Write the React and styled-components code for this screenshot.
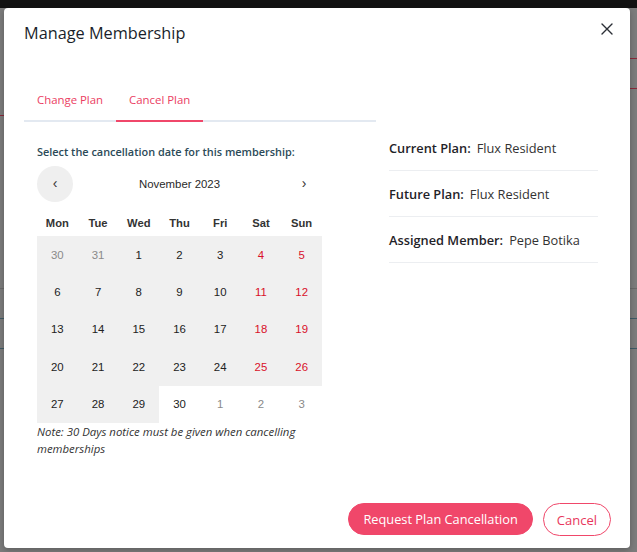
import React from "react";
import styled, { createGlobalStyle } from "styled-components";

const GlobalStyle = createGlobalStyle`
  * { box-sizing: border-box; }
  body {
    margin: 0;
    background: #7c7c7c;
    font-family: "Open Sans", "Liberation Sans", sans-serif;
  }
`;

const weekdays = ["Mon", "Tue", "Wed", "Thu", "Fri", "Sat", "Sun"];

const days = [
  { n: 30, other: true, off: true },
  { n: 31, other: true, off: true },
  { n: 1, off: true },
  { n: 2, off: true },
  { n: 3, off: true },
  { n: 4, off: true, weekend: true },
  { n: 5, off: true, weekend: true },
  { n: 6, off: true },
  { n: 7, off: true },
  { n: 8, off: true },
  { n: 9, off: true },
  { n: 10, off: true },
  { n: 11, off: true, weekend: true },
  { n: 12, off: true, weekend: true },
  { n: 13, off: true },
  { n: 14, off: true },
  { n: 15, off: true },
  { n: 16, off: true },
  { n: 17, off: true },
  { n: 18, off: true, weekend: true },
  { n: 19, off: true, weekend: true },
  { n: 20, off: true },
  { n: 21, off: true },
  { n: 22, off: true },
  { n: 23, off: true },
  { n: 24, off: true },
  { n: 25, off: true, weekend: true },
  { n: 26, off: true, weekend: true },
  { n: 27, off: true },
  { n: 28, off: true },
  { n: 29, off: true },
  { n: 30 },
  { n: 1, other: true },
  { n: 2, other: true },
  { n: 3, other: true },
];

const details = [
  { label: "Current Plan:", value: "Flux Resident" },
  { label: "Future Plan:", value: "Flux Resident" },
  { label: "Assigned Member:", value: "Pepe Botika" },
];

const App = () => {
  return (
    <Page>
      <GlobalStyle />
      <TopBar />
      <Backdrop>
        <BgRow>
          <BgTab />
          <BgButton />
        </BgRow>
        <BgLine />
        <BgLine $teal />
        <BgLine $teal />
      </Backdrop>
      <Modal>
        <Header>
          <Title>Manage Membership</Title>
          <CloseButton aria-label="Close">
            <svg width="12" height="12" viewBox="0 0 12 12">
              <path
                d="M1 1L11 11M11 1L1 11"
                stroke="#2b2f36"
                strokeWidth="1.4"
                strokeLinecap="round"
              />
            </svg>
          </CloseButton>
        </Header>
        <Body>
          <LeftColumn>
            <Tabs>
              <Tab>Change Plan</Tab>
              <Tab $active>Cancel Plan</Tab>
            </Tabs>
            <Panel>
              <Prompt>Select the cancellation date for this membership:</Prompt>
              <Calendar>
                <NavRow>
                  <NavButton $filled>‹</NavButton>
                  <MonthLabel>November 2023</MonthLabel>
                  <NavButton>›</NavButton>
                </NavRow>
                <WeekdayRow>
                  {weekdays.map((w) => (
                    <Weekday key={w}>{w}</Weekday>
                  ))}
                </WeekdayRow>
                <DayGrid>
                  {days.map((d, i) => (
                    <Day
                      key={i}
                      $off={d.off}
                      $other={d.other}
                      $weekend={d.weekend}
                    >
                      {d.n}
                    </Day>
                  ))}
                </DayGrid>
              </Calendar>
              <Note>
                Note: 30 Days notice must be given when cancelling memberships
              </Note>
            </Panel>
          </LeftColumn>
          <RightColumn>
            {details.map((d) => (
              <DetailRow key={d.label}>
                <strong>{d.label}</strong>
                <span>{d.value}</span>
              </DetailRow>
            ))}
          </RightColumn>
        </Body>
        <Footer>
          <PrimaryButton>Request Plan Cancellation</PrimaryButton>
          <OutlineButton>Cancel</OutlineButton>
        </Footer>
      </Modal>
    </Page>
  );
};

const Page = styled.div`
  position: relative;
  width: 637px;
  height: 552px;
  overflow: hidden;
  background: #7c7c7c;
`;

const TopBar = styled.div`
  height: 8px;
  background: #121212;
`;

const Backdrop = styled.div`
  display: flex;
  flex-direction: column;
  padding-top: 50px;
`;

const BgRow = styled.div`
  display: flex;
  justify-content: space-between;
  align-items: flex-start;
  height: 60px;
`;

const BgTab = styled.div`
  width: 30px;
  height: 58px;
  border-bottom: 1px solid #8a2a3a;
`;

const BgButton = styled.div`
  width: 40px;
  height: 31px;
  margin-right: -30px;
  border: 1px solid #8a2a3a;
`;

const BgLine = styled.div`
  height: 1px;
  margin-top: ${(p) => (p.$teal ? "29px" : "170px")};
  background: ${(p) => (p.$teal ? "#3e5a66" : "#6a6a6a")};
`;

const Modal = styled.div`
  position: absolute;
  left: 4px;
  top: 8px;
  width: 626px;
  height: 540px;
  background: #ffffff;
  border-radius: 4px;
  box-shadow: 0 2px 6px rgba(0, 0, 0, 0.25);
  display: flex;
  flex-direction: column;
`;

const Header = styled.div`
  display: flex;
  justify-content: space-between;
  align-items: center;
  height: 50px;
  padding: 0 16px 0 20px;
`;

const Title = styled.h2`
  margin: 0;
  font-family: "Open Sans", sans-serif;
  font-size: 16.3px;
  font-weight: 500;
  color: #1a1f2b;
`;

const CloseButton = styled.button`
  border: none;
  background: transparent;
  padding: 0;
  width: 14px;
  height: 14px;
  display: flex;
  align-items: center;
  justify-content: center;
  margin-top: -8px;
  cursor: pointer;
`;

const Body = styled.div`
  display: flex;
  align-items: flex-start;
  padding: 0 20px;
  margin-top: 19px;
`;

const LeftColumn = styled.div`
  width: 352px;
  flex: none;
`;

const Tabs = styled.div`
  display: flex;
  border-bottom: 2px solid #e3e9f1;
`;

const Tab = styled.div`
  padding: 14px 13px 11px;
  line-height: 18px;
  font-size: 11.4px;
  color: #eb3d62;
  margin-bottom: -2px;
  border-bottom: 2px solid ${(p) => (p.$active ? "#f0476a" : "transparent")};
  cursor: pointer;
`;

const Panel = styled.div`
  padding: 21px 13px 0;
`;

const Prompt = styled.div`
  font-size: 10.9px;
  line-height: 18px;
  font-weight: 600;
  color: #2c4a58;
`;

const Calendar = styled.div`
  width: 285px;
  margin-top: 5px;
  font-family: "Liberation Sans", Arial, sans-serif;
  color: #222;
`;

const NavRow = styled.div`
  display: flex;
  align-items: center;
  justify-content: space-between;
  height: 36px;
`;

const NavButton = styled.button`
  width: 36px;
  height: 36px;
  border: none;
  border-radius: 50%;
  background: ${(p) => (p.$filled ? "#efefef" : "transparent")};
  font-family: "Liberation Sans", Arial, sans-serif;
  font-size: 14px;
  color: #333;
  padding: 0 0 2px;
  cursor: pointer;
`;

const MonthLabel = styled.div`
  font-size: 11.4px;
  color: #2a2a2a;
`;

const WeekdayRow = styled.div`
  display: grid;
  grid-template-columns: repeat(7, 1fr);
  height: 26px;
  margin-top: 8px;
`;

const Weekday = styled.div`
  display: flex;
  align-items: center;
  justify-content: center;
  font-size: 11.2px;
  font-weight: 700;
  color: #333;
`;

const DayGrid = styled.div`
  display: grid;
  grid-template-columns: repeat(7, 1fr);
  grid-auto-rows: 37.4px;
`;

const Day = styled.div`
  display: flex;
  align-items: center;
  justify-content: center;
  font-size: 11.4px;
  background: ${(p) => (p.$off ? "#f0f0f0" : "#ffffff")};
  color: ${(p) => (p.$other ? "#8a8a8a" : p.$weekend ? "#d9102a" : "#222")};
`;

const Note = styled.p`
  margin: 0;
  font-size: 11.4px;
  line-height: 17px;
  font-style: italic;
  color: #333;
  width: 285px;
`;

const RightColumn = styled.div`
  width: 209px;
  margin-left: 13px;
  margin-top: 48px;
  display: flex;
  flex-direction: column;
`;

const DetailRow = styled.div`
  height: 46px;
  display: flex;
  align-items: center;
  gap: 6px;
  border-bottom: 1px solid #eceef1;
  font-size: 12.8px;
  color: #333;

  strong {
    font-weight: 600;
    color: #1f2328;
  }
`;

const Footer = styled.div`
  margin-top: auto;
  display: flex;
  justify-content: flex-end;
  gap: 10px;
  padding: 0 19px 12px 0;
`;

const PrimaryButton = styled.button`
  height: 32px;
  padding: 0 14px;
  border-radius: 16px;
  border: 1px solid #f0476a;
  background: #f0476a;
  color: #fff;
  font-family: "Open Sans", sans-serif;
  font-size: 12.8px;
  cursor: pointer;
`;

const OutlineButton = styled.button`
  height: 33px;
  padding: 0 13px;
  border-radius: 17px;
  border: 1px solid #f0476a;
  background: #fff;
  color: #e8365c;
  font-family: "Open Sans", sans-serif;
  font-size: 13px;
  cursor: pointer;
`;

export default App;
